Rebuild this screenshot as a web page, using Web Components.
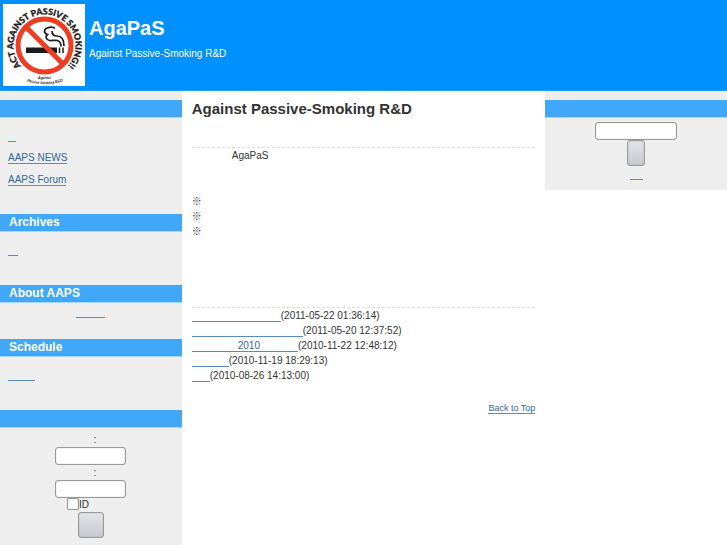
<!DOCTYPE html>
<html lang="ja">
<head>
<meta charset="utf-8">
<meta name="viewport" content="width=device-width, initial-scale=1">
<title>AgaPaS</title>
<style>
	body {
		margin: 0;
		background: #fff;
		color: #333;
		font: 10px/15px "Liberation Sans", "Noto Sans CJK JP", sans-serif;
	}
</style>
</head>
<body>
<aaps-page>
	<site-header slot="header" name="AgaPaS" tagline="Against Passive-Smoking R&amp;D"></site-header>

	<side-column slot="left">
		<side-block kind="menu" style="--after: 23px">
			<text-link space="8" label="Home"></text-link>
			<text-link>AAPS NEWS</text-link>
			<text-link>AAPS Forum</text-link>
		</side-block>
		<side-block kind="menu" heading="Archives">
			<text-link space="10" label="Archive list"></text-link>
		</side-block>
		<side-block kind="center" heading="About AAPS">
			<text-link space="29" label="About"></text-link>
		</side-block>
		<side-block kind="menu" heading="Schedule">
			<text-link space="27" label="Calendar"></text-link>
		</side-block>
		<side-block kind="center">
			<login-form></login-form>
		</side-block>
	</side-column>

	<main-article heading="Against Passive-Smoking R&amp;D">
		<news-item space="89" date="2011-05-22 01:36:14"></news-item>
		<news-item space="111" date="2011-05-20 12:37:52"></news-item>
		<news-item space="46" after="38" date="2010-11-22 12:48:12">2010</news-item>
		<news-item space="37" date="2010-11-19 18:29:13"></news-item>
		<news-item space="18" date="2010-08-26 14:13:00"></news-item>
	</main-article>

	<side-column slot="right">
		<side-block kind="center" style="--after: 9px">
			<search-form></search-form>
		</side-block>
	</side-column>
</aaps-page>

<script>
	const fieldStyles = `
		input, button {
			box-sizing: border-box;
			margin: 0;
			border: 1px solid #999;
			border-radius: 3px;
			font: inherit;
		}

		input {
			height: 18px;
			padding: 1px 3px;
			background: #fff;
			box-shadow: inset 0 0 1px #888;
		}

		button {
			height: 26px;
			padding: 0;
			background: linear-gradient(#e2e4ea, #c8c9cf);
			box-shadow: inset 0 0 1px #888;
		}
	`;

	class AapsPage extends HTMLElement {
		constructor() {
			super();
			this.attachShadow({ mode: 'open' });
			this.shadowRoot.innerHTML = `
				<style>
					:host {
						display: flex;
						flex-direction: column;
						min-height: 100vh;
					}

					.columns {
						flex: 1;
						display: grid;
						grid-template-columns: 1fr 2fr 1fr;
					}

					slot[name=right]::slotted(*) {
						align-self: start;
					}
				</style>
				<slot name="header"></slot>
				<div class="columns">
					<slot name="left"></slot>
					<slot></slot>
					<slot name="right"></slot>
				</div>
			`;
		}
	}

	class SiteLogo extends HTMLElement {
		constructor() {
			super();
			this.attachShadow({ mode: 'open' });
			this.shadowRoot.innerHTML = `
				<style>
					:host { display: block; }
					svg { display: block; background: #fff; }
					text { fill: #1c1a1a; font-family: Lato, sans-serif; }
				</style>
				<svg width="82" height="82" viewBox="0 0 82 82" role="img" aria-label="Act against passive smoking">
					<defs>
						<path id="ring" d="M21 64.800 A31 31 0 1 1 62 64.800"/>
						<path id="foot" d="M20 76 Q41.500 84.500 64 76"/>
					</defs>
					<rect x="23" y="43.500" width="31" height="5.500" fill="#1c1a1a"/>
					<path d="M56.500 43.500v5.500M60 43.500v5.500" stroke="#1c1a1a" stroke-width="1.500"/>
					<path d="M52 24.500c-2-2.500-10-1.500-10.500 2.500 0 2 1 3 3 3.500-2.500 2-1.500 5.500 2 6 3 .300 5-.500 8 0 3 1 3.500 3 3.500 6M49 27c0 4 2 5 5 5 5 0 7 4 7 10" fill="none" stroke="#1c1a1a" stroke-width="1.700"/>
					<circle cx="41.500" cy="41.500" r="26.500" fill="none" stroke="#ee3d23" stroke-width="5"/>
					<path d="M23 23L60 60" stroke="#ee3d23" stroke-width="5"/>
					<text font-size="8.700" font-weight="900" stroke="#1c1a1a" stroke-width=".300"><textPath href="#ring" startOffset="50%" text-anchor="middle">ACT AGAINST PASSIVE SMOKING!!</textPath></text>
					<text x="41.500" y="75" font-size="4" font-weight="700" font-style="italic" text-anchor="middle">Against</text>
					<text font-size="4" font-weight="700" font-style="italic"><textPath href="#foot" startOffset="50%" text-anchor="middle">Passive Smoking R&amp;D</textPath></text>
				</svg>
			`;
		}
	}

	class SiteHeader extends HTMLElement {
		constructor() {
			super();
			this.attachShadow({ mode: 'open' });
			this.shadowRoot.innerHTML = `
				<style>
					:host {
						display: flex;
						gap: 4px;
						padding: 4px 3px 4px;
						border-bottom: 1px solid #2b9dff;
						background: #0090ff;
						color: #fff;
					}

					.text { padding-top: 12px; }
					h1 { margin: 0; font-size: 20px; line-height: 24px; }
					p { margin: 6px 0 0; line-height: 15px; }
				</style>
				<site-logo></site-logo>
				<div class="text">
					<h1></h1>
					<p></p>
				</div>
			`;
			this.shadowRoot.querySelector('h1').textContent = this.getAttribute('name');
			this.shadowRoot.querySelector('p').textContent = this.getAttribute('tagline');
		}
	}

	class SideColumn extends HTMLElement {
		constructor() {
			super();
			this.attachShadow({ mode: 'open' });
			this.shadowRoot.innerHTML = `
				<style>
					:host {
						display: block;
						padding-top: 9px;
						background: #eee;
					}
				</style>
				<slot></slot>
			`;
		}
	}

	class SideBlock extends HTMLElement {
		constructor() {
			super();
			this.attachShadow({ mode: 'open' });
			const heading = this.getAttribute('heading') || '';
			this.shadowRoot.innerHTML = `
				<style>
					:host { display: block; }

					.bar {
						box-sizing: border-box;
						height: 18px;
						margin: 0;
						padding: 0 9px;
						border-bottom: 1px solid #a9d5f8;
						background: #41a7f8;
						color: #fff;
						font-size: 12px;
						line-height: 17px;
					}

					.body {
						display: flex;
						flex-direction: column;
					}

					:host([kind=menu]) .body {
						align-items: flex-start;
						gap: 7px;
						padding: 10px 8px calc(var(--after, 24px) + 4px);
					}

					:host([kind=center]) .body {
						align-items: center;
						padding: 1px 8px var(--after, 20px);
					}
				</style>
				${heading ? `<h2 class="bar">${heading}</h2>` : '<div class="bar"></div>'}
				<div class="body"><slot></slot></div>
			`;
		}
	}

	// "space" is the blank run before the link text, "after" the one behind it
	class TextLink extends HTMLElement {
		constructor() {
			super();
			this.attachShadow({ mode: 'open' });
			const before = this.getAttribute('space') || 0;
			const after = this.getAttribute('after') || 0;
			this.shadowRoot.innerHTML = `
				<style>
					:host {
						display: inline-block;
						line-height: 15px;
					}

					a {
						display: inline-block;
						min-height: 10px;
						padding: 0 ${after}px 0 ${before}px;
						border-bottom: 1px solid #5a8abb;
						color: #336699;
						line-height: 10px;
						text-decoration: none;
						vertical-align: middle;
					}
				</style>
				<a href="#"><slot></slot></a>
			`;
			if (this.hasAttribute('label'))
				this.shadowRoot.querySelector('a').setAttribute('aria-label', this.getAttribute('label'));
		}
	}

	class NewsItem extends HTMLElement {
		constructor() {
			super();
			this.attachShadow({ mode: 'open' });
			this.shadowRoot.innerHTML = `
				<style>
					:host { display: flex; }
				</style>
				<text-link label="News" space="${this.getAttribute('space')}" after="${this.getAttribute('after') || 0}"><slot></slot></text-link>
				<time>(${this.getAttribute('date')})</time>
			`;
		}
	}

	class MainArticle extends HTMLElement {
		constructor() {
			super();
			this.attachShadow({ mode: 'open' });
			this.shadowRoot.innerHTML = `
				<style>
					:host {
						display: block;
						padding: 8px 10px;
					}

					h2 { margin: 0 0 28px; font-size: 15px; line-height: 20px; }
					section { border-top: 1px dashed #ddd; }
					p { margin: 0; }
					.lead { padding-left: 40px; }
					ul { margin: 31px 0 68px; padding: 0; list-style: none; }
					.top { margin-top: 18px; text-align: right; font-size: 9px; }
				</style>
				<h2></h2>
				<section>
					<p class="lead">AgaPaS</p>
					<ul>
						<li>※</li>
						<li>※</li>
						<li>※</li>
					</ul>
				</section>
				<section><slot></slot></section>
				<p class="top"><text-link>Back to Top</text-link></p>
			`;
			this.shadowRoot.querySelector('h2').textContent = this.getAttribute('heading');
		}
	}

	class LoginForm extends HTMLElement {
		constructor() {
			super();
			this.attachShadow({ mode: 'open' });
			this.shadowRoot.innerHTML = `
				<style>
					${fieldStyles}
					:host { display: block; }

					form {
						display: flex;
						flex-direction: column;
						align-items: center;
						padding-top: 3px;
					}

					.name { padding-left: 8px; }
					.field { width: 71px; }

					.remember {
						display: flex;
						align-items: center;
						height: 12px;
						margin-bottom: 2px;
						padding-right: 26px;
					}

					input[type=checkbox] {
						appearance: none;
						width: 12px;
						height: 12px;
						border-radius: 1px;
					}

					button { width: 26px; }
				</style>
				<form>
					<label class="name" for="user">:</label>
					<input class="field" id="user" type="text">
					<label class="name" for="pass">:</label>
					<input class="field" id="pass" type="password">
					<div class="remember">
						<input id="keep" type="checkbox">
						<label for="keep">ID</label>
					</div>
					<button type="button" aria-label="Log in"></button>
				</form>
			`;
		}
	}

	class SearchForm extends HTMLElement {
		constructor() {
			super();
			this.attachShadow({ mode: 'open' });
			this.shadowRoot.innerHTML = `
				<style>
					${fieldStyles}
					:host { display: block; }

					form {
						display: flex;
						flex-direction: column;
						align-items: center;
						padding-top: 3px;
					}

					input { width: 82px; }
					button { width: 18px; }
				</style>
				<form>
					<input type="text" aria-label="Search">
					<button type="button" aria-label="Go"></button>
					<text-link space="13" label="Advanced search"></text-link>
				</form>
			`;
		}
	}

	customElements.define('text-link', TextLink);
	customElements.define('site-logo', SiteLogo);
	customElements.define('site-header', SiteHeader);
	customElements.define('side-column', SideColumn);
	customElements.define('side-block', SideBlock);
	customElements.define('news-item', NewsItem);
	customElements.define('main-article', MainArticle);
	customElements.define('login-form', LoginForm);
	customElements.define('search-form', SearchForm);
	customElements.define('aaps-page', AapsPage);
</script>
</body>
</html>
